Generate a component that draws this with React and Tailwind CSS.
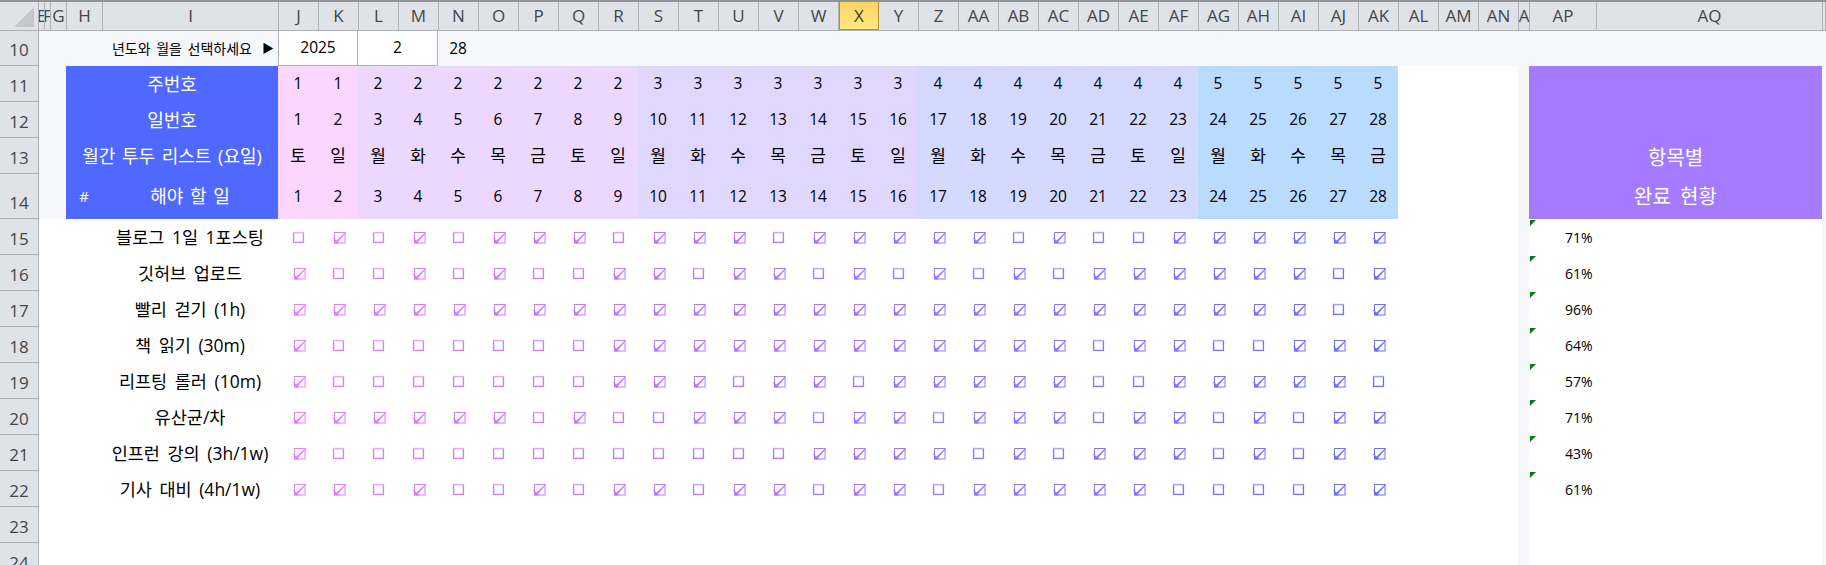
const sans = 'font-["Open_Sans","Noto_Sans_CJK_KR",sans-serif]'

const colunasDias = ['J','K','L','M','N','O','P','Q','R','S','T','U','V','W','X','Y','Z','AA','AB','AC','AD','AE','AF','AG','AH','AI','AJ','AK']
const colunasEsquerda = [['E','w-[6px]'],['F','w-[6px]'],['G','w-[16px]'],['H','w-[36px]'],['I','w-[176px]']]
const colunasDireita = [['AL','w-[40px]'],['AM','w-[40px]'],['AN','w-[40px]'],['A','w-[11px]'],['AP','w-[67px]'],['AQ','w-[226px]'],['','w-[3px]']]

const semanas = [1,1,2,2,2,2,2,2,2,3,3,3,3,3,3,3,4,4,4,4,4,4,4,5,5,5,5,5]
const diasSemana = ['토','일','월','화','수','목','금','토','일','월','화','수','목','금','토','일','월','화','수','목','금','토','일','월','화','수','목','금']
const dias = Array.from({ length: 28 }, (_, i) => i + 1)

const corSemana = {
  1: 'bg-[#FBD6FF]',
  2: 'bg-[#ECD8FF]',
  3: 'bg-[#E0D7FF]',
  4: 'bg-[#D4D9FF]',
  5: 'bg-[#B9DBFF]',
}

const tarefas = [
  ['블로그 1일 1포스팅', '0101011101110111110100111111', '71%'],
  ['깃허브 업로드', '1001010011011010101011111101', '61%'],
  ['빨리 걷기 (1h)', '1111111111111111111111111101', '96%'],
  ['책 읽기 (30m)', '1000000011111111111101100111', '64%'],
  ['리프팅 롤러 (10m)', '1000000011101101111100111110', '57%'],
  ['유산균/차', '1111110100111011011101101011', '71%'],
  ['인프런 강의 (3h/1w)', '1000000000000111101011101011', '43%'],
  ['기사 대비 (4h/1w)', '1101001011011011011111000011', '61%'],
]

function corColuna(i) {
  const t = i / 27
  const r = Math.round(224 + (107 - 224) * t)
  const g = Math.round(128 + (112 - 128) * t)
  const b = 255
  return `rgb(${r}, ${g}, ${b})`
}

function Caixa({ marcado, coluna }) {
  return (
    <svg width="16" height="14" viewBox="0 0 16 14" style={{ color: corColuna(coluna) }}>
      {marcado ? (
        <g>
          <rect x="4.5" y="2.5" width="10.5" height="10.5" fill="none" stroke="currentColor" />
          <path d="M3 8.6 L4.5 9" fill="none" stroke="currentColor" />
          <path d="M4.5 13.5 L4.5 9.5 L5.5 9.5 L6.6 10.6 L15 2.5 L16.3 2.5 L8.4 11.4 L8.4 13.5 Z" fill="currentColor" />
        </g>
      ) : (
        <g fill="none" stroke="currentColor">
          <rect x="3.5" y="2.5" width="10" height="10" strokeWidth="1.2" />
          <rect x="4.5" y="3.5" width="8" height="8" opacity="0.18" />
          <path d="M3 2.5 L14 2.5" stroke="#ffffff" opacity="0.35" />
        </g>
      )}
    </svg>
  )
}

function TituloColuna({ nome, largura, ativo }) {
  return (
    <div
      className={`flex ${largura} shrink-0 items-center justify-center overflow-hidden border-r text-[17px] ${
        ativo
          ? 'border-[#C8892A] border-l border-b bg-gradient-to-b from-[#FFD35F] to-[#FFEA80] text-[#3C3C3C]'
          : 'border-[#AEB2B7] text-[#44464A]'
      }`}
    >
      {nome}
    </div>
  )
}

function NumeroLinha({ n, altura }) {
  return (
    <div className={`flex ${altura} w-[39px] shrink-0 items-end justify-center border-r border-b border-[#AEB2B7] bg-[#DFE2E6] text-[17px] leading-[30px] text-[#44464A]`}>
      {n}
    </div>
  )
}

function LinhaCabecalho({ altura, n, rotulo, valores, tamanho }) {
  return (
    <div className={`flex ${altura}`}>
      <NumeroLinha n={n} altura={altura} />
      <div className="w-[27px] shrink-0" />
      <div className="relative flex w-[212px] shrink-0 items-center justify-center bg-[#4F68FF] text-[18px] [word-spacing:2px] text-white">
        {rotulo}
      </div>
      {valores.map((v, i) => (
        <div
          key={i}
          className={`flex w-[40px] shrink-0 items-center justify-center text-black ${tamanho} ${corSemana[semanas[i]]}`}
        >
          {v}
        </div>
      ))}
      <div className="w-[120px] shrink-0 bg-white" />
      <div className="w-[11px] shrink-0" />
      <div className={`flex w-[293px] shrink-0 items-center justify-center bg-[#A47BFF] text-[20px] [word-spacing:4px] text-white ${n === 13 ? 'pt-[3px]' : ''}`}>
        {n === 13 ? '항목별' : n === 14 ? '완료 현황' : ''}
      </div>
    </div>
  )
}

export default function App() {
  return (
    <div className={`h-[565px] w-[1826px] overflow-hidden bg-[#F5F7FB] ${sans}`}>
      <div className="flex h-[31px] border-t-2 border-b border-t-[#8F9296] border-b-[#AEB2B7] bg-[#DFE2E6]">
        <div className="flex w-[39px] shrink-0 items-end justify-end border-r border-[#AEB2B7] pr-[4px] pb-[3px]">
          <svg width="20" height="20" viewBox="0 0 20 20">
            <path d="M20 0 L20 20 L0 20 Z" fill="#C4C7CB" />
          </svg>
        </div>
        {colunasEsquerda.map(([nome, largura]) => (
          <TituloColuna key={nome} nome={nome} largura={largura} />
        ))}
        {colunasDias.map((nome) => (
          <TituloColuna key={nome} nome={nome} largura="w-[40px]" ativo={nome === 'X'} />
        ))}
        {colunasDireita.map(([nome, largura]) => (
          <TituloColuna key={largura + nome} nome={nome} largura={largura} />
        ))}
      </div>

      <div className="flex h-[35px]">
        <NumeroLinha n={10} altura="h-[35px]" />
        <div className="flex w-[239px] shrink-0 items-center justify-end gap-[10px] pr-[4px] text-[14px] [word-spacing:2px] text-black">
          <span>년도와 월을 선택하세요</span>
          <span className="text-[12px]">▶</span>
        </div>
        <div className="flex w-[80px] shrink-0 items-center justify-center border-x border-b border-[#AEB2B7] bg-white text-[15.5px] text-black">
          2025
        </div>
        <div className="flex w-[80px] shrink-0 items-center justify-center border-r border-b border-[#AEB2B7] bg-white text-[15.5px] text-black">
          2
        </div>
        <div className="flex w-[40px] shrink-0 items-center justify-center text-[15.5px] text-black">28</div>
      </div>

      <LinhaCabecalho altura="h-[36px]" n={11} rotulo="주번호" valores={semanas} tamanho="text-[15.5px]" />
      <LinhaCabecalho altura="h-[36px]" n={12} rotulo="일번호" valores={dias} tamanho="text-[15.5px]" />
      <LinhaCabecalho altura="h-[36px]" n={13} rotulo="월간 투두 리스트 (요일)" valores={diasSemana} tamanho="text-[17px]" />
      <LinhaCabecalho
        altura="h-[45px]"
        n={14}
        rotulo={
          <div className="flex w-full items-center">
            <span className="w-[36px] text-center text-[15px]">#</span>
            <span className="w-[176px] text-center">해야 할 일</span>
          </div>
        }
        valores={dias}
        tamanho="text-[15.5px]"
      />

      {tarefas.map(([nome, marcas, pct], linha) => (
        <div key={nome} className="flex h-[36px]">
          <NumeroLinha n={15 + linha} altura="h-[36px]" />
          <div className="flex w-[27px] shrink-0 bg-white" />
          <div className="w-[36px] shrink-0 bg-white" />
          <div className="flex w-[176px] shrink-0 items-center justify-center bg-white text-[17.5px] [word-spacing:3px] whitespace-nowrap text-black">
            {nome}
          </div>
          {marcas.split('').map((m, i) => (
            <div key={i} className="flex w-[40px] shrink-0 items-center justify-center bg-white">
              <Caixa marcado={m === '1'} coluna={i} />
            </div>
          ))}
          <div className="w-[120px] shrink-0 bg-white" />
          <div className="w-[11px] shrink-0" />
          <div className="relative flex w-[293px] shrink-0 items-center bg-white pl-[36px] text-[14px] text-black">
            <svg className="absolute top-[1px] left-[1px]" width="6" height="6" viewBox="0 0 6 6">
              <path d="M0 0 L6 0 L0 6 Z" fill="#0B7A0B" />
            </svg>
            {pct}
          </div>
        </div>
      ))}

      {[23, 24].map((n) => (
        <div key={n} className="flex h-[36px]">
          <NumeroLinha n={n} altura="h-[36px]" />
          <div className="w-[1479px] shrink-0 bg-white" />
          <div className="w-[11px] shrink-0" />
          <div className="w-[293px] shrink-0 bg-white" />
        </div>
      ))}
    </div>
  )
}
